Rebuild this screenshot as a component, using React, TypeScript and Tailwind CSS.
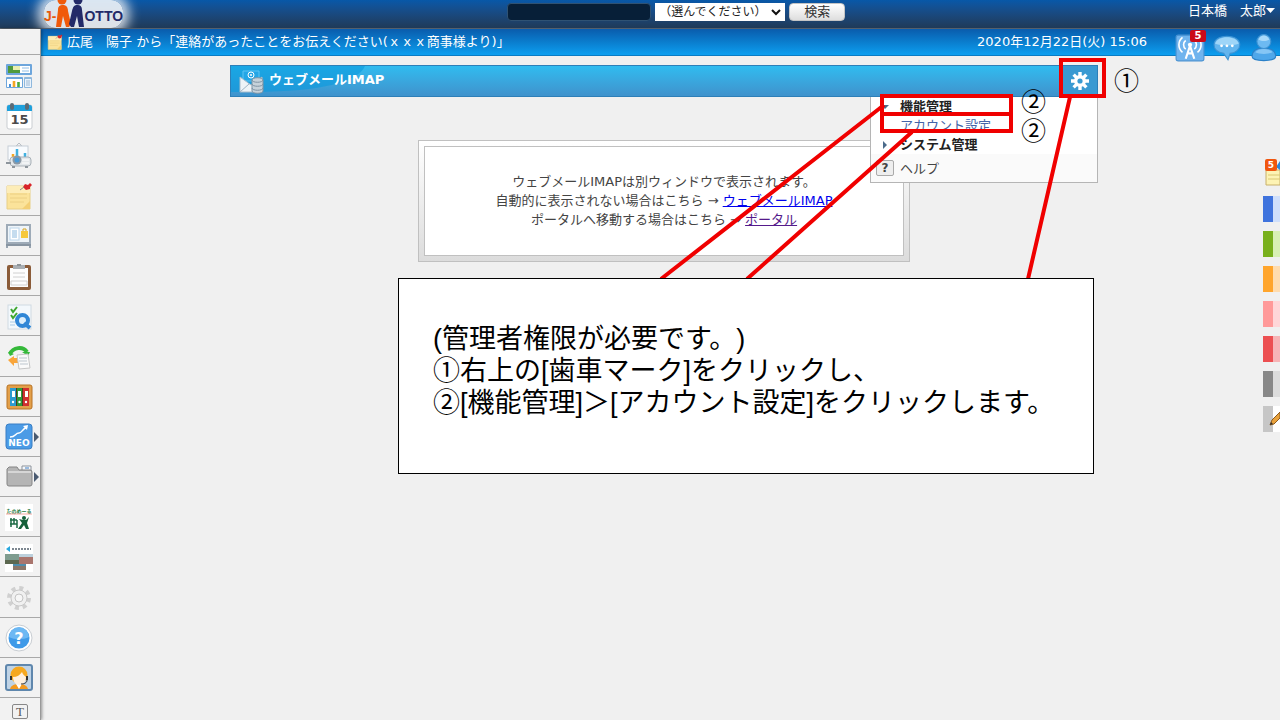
import React from "react";

const Svg = ({ children, className = "size-7" }: { children: React.ReactNode; className?: string }) => (
  <svg viewBox="0 0 28 28" fill="none" aria-hidden="true" className={className}>
    {children}
  </svg>
);

const PortalIcon = () => (
  <Svg>
    <rect x="1" y="2" width="26" height="11" rx="1" fill="#6ea6dc" />
    <rect x="3" y="4" width="22" height="7" fill="#fff" />
    <rect x="3" y="4" width="12" height="7" fill="#4f9a3c" />
    <path d="M8 4h7v4H8z" fill="#e9efb0" />
    <path d="M17 6h7M17 9h7" stroke="#8fbde6" strokeWidth="1" />
    <rect x="1" y="15" width="17" height="11" rx="1" fill="#6ea6dc" />
    <rect x="2" y="17" width="15" height="8" fill="#fff" />
    <path d="M5 25v-3" stroke="#4a90d9" strokeWidth="2" />
    <path d="M9 25v-6" stroke="#f5a623" strokeWidth="2.6" />
    <path d="M13.500 25v-5" stroke="#4ca93c" strokeWidth="2.600" />
    <rect x="19" y="15" width="8" height="11" rx="1" fill="#8fb8dd" />
    <rect x="20" y="17" width="6" height="8" fill="#eaf3fc" />
    <path d="M21 19h4M21 21h4M21 23h4" stroke="#9bb8d4" />
  </Svg>
);

const CalendarIcon = () => (
  <Svg>
    <rect x="2" y="3" width="25" height="24" rx="2" fill="#fff" stroke="#c9cdd1" />
    <path d="M2 5a2 2 0 0 1 2-2h21a2 2 0 0 1 2 2v4H2z" fill="#1ea0dc" />
    <rect x="5" y="1" width="4" height="7" rx="2" fill="#5b6a75" />
    <rect x="20" y="1" width="4" height="7" rx="2" fill="#5b6a75" />
    <text x="14.500" y="22" textAnchor="middle" fontSize="13" fontWeight="700" fill="#4a4a4a">15</text>
  </Svg>
);

const ProjectorIcon = () => (
  <Svg>
    <path d="M14 1l3 3h-6z" stroke="#b9bec4" />
    <rect x="3" y="4" width="20" height="14" fill="#f8fbfe" stroke="#c6ced6" />
    <path d="M8 16v-4" stroke="#f5a623" strokeWidth="2.500" />
    <path d="M12 14V7M20 15v-4" stroke="#3fb0e0" strokeWidth="2.500" />
    <rect x="5" y="15" width="21" height="9" rx="3" fill="#e3e7ea" stroke="#a9b1b8" />
    <path d="M17 18h7M17 21h7" stroke="#fff" />
    <circle cx="12" cy="18" r="4.500" fill="#8a98a5" />
    <circle cx="12" cy="18" r="2.500" fill="#4a9bd8" />
    <path d="M1 21h5M7 25h3M20 25h3" stroke="#8d959c" strokeWidth="2" />
  </Svg>
);

const StickyIcon = ({ className }: { className?: string }) => (
  <Svg className={className}>
    <path d="M2 4h23v23H2z" fill="#fbe39a" stroke="#e8cf86" />
    <path d="M2 4h23v7H2z" fill="#fdedb8" />
    <path d="M5 12h17M5 16h17M5 20h14" stroke="#ecd084" />
    <path d="M25 19v8h-8z" fill="#f3cf74" />
    <path d="M18 5l2-3 3 1 2-2 2 2-2 2v2l-4 1z" fill="#d8232a" />
    <path d="M15 8l4-3" stroke="#888" />
  </Svg>
);

const BoardIcon = () => (
  <Svg>
    <path d="M2 3v23M25 3v23" stroke="#98a4b0" strokeWidth="2" />
    <rect x="2" y="3" width="23" height="18" fill="#eef4f9" stroke="#9eabb8" strokeWidth="2" />
    <rect x="5" y="6" width="9" height="12" fill="#fff" stroke="#bcd6ec" />
    <path d="M7 9h5M7 11h5M7 13h5M7 15h5" stroke="#8bb9de" />
    <rect x="16" y="9" width="7" height="7" fill="#f6c83c" />
    <path d="M18 9V7h3v2" stroke="#d9a520" />
    <path d="M1 23h25" stroke="#8895a2" strokeWidth="2" />
  </Svg>
);

const ClipboardIcon = () => (
  <Svg>
    <rect x="2" y="2" width="24" height="25" rx="2" fill="#8b5c39" />
    <rect x="5" y="5" width="18" height="19" fill="#fdfdfd" />
    <path d="M8 2h12v4H8z" fill="#a9afb4" />
    <path d="M12 1h4v2h-4z" fill="#8d9499" />
    <path d="M8 10h12M8 14h12M6 18h16v4H6z" stroke="#d0d0d0" />
  </Svg>
);

const QuestionnaireIcon = () => (
  <Svg>
    <rect x="3" y="2" width="23" height="24" fill="#f3f8fc" stroke="#d0dae2" />
    <path d="M6 6l2 3 4-5M6 12l2 3 4-5" stroke="#3ea72f" strokeWidth="2" />
    <path d="M5 19h5M5 22h5" stroke="#a8cbe6" />
    <circle cx="17.500" cy="17.500" r="5.500" stroke="#2f86d6" strokeWidth="4" fill="#dceefb" />
    <path d="M19 20l6 5" stroke="#2f86d6" strokeWidth="4" />
  </Svg>
);

const WorkflowIcon = () => (
  <Svg>
    <path d="M5 11C8 4 18 3 22 9" stroke="#35b93a" strokeWidth="4" />
    <path d="M17 9h8l-2 4z" fill="#35b93a" />
    <path d="M3 9l2 4 4-2z" fill="#35b93a" />
    <path d="M3 17l6-4v2h5v5H9v3z" fill="#f9a53a" />
    <path d="M12 12l11-1 2 14-11 1z" fill="#fafafa" stroke="#c6c6c6" />
    <path d="M14 15h8M14 18h8M15 21h8" stroke="#bdc6ce" />
  </Svg>
);

const CabinetIcon = () => (
  <Svg>
    <rect x="2" y="2" width="25" height="24" rx="2" fill="#e3a04a" stroke="#b87324" />
    <rect x="5" y="5" width="19" height="18" fill="#4f3a22" />
    <rect x="5" y="5" width="6" height="18" fill="#2c9bd0" />
    <rect x="12" y="5" width="5" height="18" fill="#2f9a3a" />
    <rect x="18" y="5" width="6" height="18" fill="#d03030" />
    <path d="M7 8h3v6H7zM13 8h3v6h-3zM20 8h3v6h-3z" fill="#fff" />
    <circle cx="8" cy="19" r="1.200" fill="#fff" />
    <circle cx="14.500" cy="19" r="1.200" fill="#fff" />
    <circle cx="21" cy="19" r="1.200" fill="#fff" />
  </Svg>
);

const NeoIcon = () => (
  <Svg>
    <rect x="1" y="1" width="26" height="25" rx="3" fill="#4b9be6" stroke="#3a7fc4" />
    <path d="M5 14c6 0 5-4 9-4 3 0 3-4 8-6" stroke="#fff" strokeWidth="1.500" />
    <path d="M18 3l5-1-1 5z" fill="#fff" />
    <text x="14" y="23" textAnchor="middle" fontSize="9" fontWeight="700" fill="#fff">NEO</text>
  </Svg>
);

const FolderIcon = () => (
  <Svg>
    <path d="M17 3h9v8h-9z" fill="#f6f8fb" stroke="#8c939b" />
    <path d="M20 5h4" stroke="#3f7fc4" />
    <path d="M2 6l2-2h8l2 3h11a2 2 0 0 1 2 2v12a2 2 0 0 1-2 2H4a2 2 0 0 1-2-2z" fill="#b5b5b5" stroke="#858585" />
    <path d="M3 9h23" stroke="#d6d6d6" strokeWidth="2" />
  </Svg>
);

const TanomailIcon = () => (
  <Svg>
    <rect width="28" height="27" fill="#fff" />
    <text x="14" y="9" textAnchor="middle" fontSize="5" fontWeight="700" fill="#1d7a3e">たのめーる</text>
    <path d="M1 10h26" stroke="#f4a8a0" />
    <path d="M5 16h7M6 14v9M9 14v6M5 20h7v4M12 16v8" stroke="#1d6b45" strokeWidth="1.500" />
    <circle cx="19" cy="14" r="2" fill="#15603a" />
    <path d="M14 15l4 1h3l3-3-2 6 2 6h-3l-2-4-3 4h-3l4-6z" fill="#15603a" />
  </Svg>
);

const TravelIcon = () => (
  <Svg>
    <rect width="28" height="28" fill="#fff" />
    <path d="M1 5l4-3v6z" fill="#29a8df" />
    <path d="M7 5h19" stroke="#7d8790" strokeWidth="2" strokeDasharray="2 1" />
    <rect y="10" width="14" height="10" fill="#7f9c8f" />
    <rect x="14" y="10" width="14" height="10" fill="#a9756d" />
    <path d="M0 16h14v4H0z" fill="#5c6850" />
    <path d="M14 10h14v3H14z" fill="#bcd0dc" />
    <rect x="8" y="20" width="13" height="6" fill="#8b776a" />
    <path d="M8 20h13v2H8z" fill="#4f8dad" />
  </Svg>
);

const SettingsIcon = () => (
  <Svg>
    <circle cx="14" cy="14" r="10" stroke="#d0d0d0" strokeWidth="4" strokeDasharray="4 3.850" />
    <circle cx="14" cy="14" r="8" fill="#f0f0f0" stroke="#c8c8c8" />
    <circle cx="14" cy="14" r="4" fill="#f6f6f6" stroke="#c4c4c4" />
  </Svg>
);

const HelpIcon = () => (
  <Svg>
    <circle cx="14" cy="14" r="13" fill="#fff" stroke="#c8cdd2" />
    <circle cx="14" cy="14" r="10.500" fill="#3f9ae8" />
    <path d="M4 13a10 10 0 0 1 20 0c-6 3-14 3-20 0z" fill="#6db8f3" />
    <text x="14" y="20" textAnchor="middle" fontSize="16" fontWeight="700" fill="#fff">?</text>
  </Svg>
);

const SupportIcon = () => (
  <Svg>
    <rect x="1" y="1" width="26" height="25" rx="2" fill="#bfd3e6" stroke="#5f87ad" strokeWidth="2" />
    <path d="M5 25c1-4 5-5 9-5s8 1 9 5z" fill="#f49a20" />
    <path d="M11 20l3 5 3-5z" fill="#fff" />
    <circle cx="14" cy="11" r="8.500" fill="#f6a81f" />
    <path d="M8 13c4 0 7-2 9-5 1 3 3 4 4 5 0 5-3 8-6.500 8S8 18 8 13z" fill="#fff0df" />
    <path d="M6 12v4M22 12v4" stroke="#333" strokeWidth="2" />
    <path d="M22 16c0 3-3 4-6 4" stroke="#333" />
  </Svg>
);

const navItems = [
  { label: "ポータル", icon: <PortalIcon /> },
  { label: "スケジュール", icon: <CalendarIcon /> },
  { label: "設備予約", icon: <ProjectorIcon /> },
  { label: "伝言・所在", icon: <StickyIcon /> },
  { label: "掲示板", icon: <BoardIcon /> },
  { label: "回覧板", icon: <ClipboardIcon /> },
  { label: "アンケート", icon: <QuestionnaireIcon /> },
  { label: "ワークフロー", icon: <WorkflowIcon /> },
  { label: "文書管理", icon: <CabinetIcon /> },
  { label: "NEO", icon: <NeoIcon />, hasMenu: true },
  { label: "フォルダ", icon: <FolderIcon />, hasMenu: true },
  { label: "たのめーる", icon: <TanomailIcon /> },
  { label: "出張手配", icon: <TravelIcon /> },
  { label: "設定", icon: <SettingsIcon /> },
  { label: "ヘルプ", icon: <HelpIcon /> },
  { label: "サポート", icon: <SupportIcon /> },
];

const tabs = [
  { label: "青", className: "border-[#3f73dd] bg-[#cfdffb]" },
  { label: "緑", className: "border-[#78b01c] bg-[#d8f0b4]" },
  { label: "橙", className: "border-[#ffa52c] bg-[#ffdcae]" },
  { label: "桃", className: "border-[#ff9999] bg-[#ffd6d8]" },
  { label: "赤", className: "border-[#ec4f51] bg-[#f7b4b6]" },
  { label: "灰", className: "border-[#888888] bg-[#dcdcdc]" },
];

const Logo = () => (
  <a
    href="#"
    aria-label="J-MOTTO"
    className="ml-11 flex h-7 items-center justify-self-start rounded-xl bg-white/85 font-['Liberation_Sans',sans-serif] text-[14px] leading-7 font-bold shadow-[0_0_12px_6px_#ffffffcc]"
  >
    <span className="pt-1 text-[#e8590c]">J-</span>
    <svg viewBox="0 0 28 28" fill="none" aria-hidden="true" className="size-7">
      <circle cx="6" cy="0" r="4.500" fill="#f05a0a" />
      <circle cx="22" cy="0" r="4.500" fill="#232a68" />
      <path d="M0 27l2-17c0-4 2-5 5-5s5 2 5 6l3 13-2 3h-3L7 16 5 27z" fill="#f05a0a" />
      <path d="M28 27l-2-17c0-4-2-5-5-5s-4 2-5 6l-3 13 2 3h3l3-11 2 11z" fill="#232a68" />
    </svg>
    <span className="pt-1 text-[#232a68]">OTTO</span>
  </a>
);

const Header = () => (
  <header className="grid h-[29px] grid-cols-[7fr_auto_6fr] items-start overflow-hidden border-b border-[#55606c] bg-linear-to-b from-[#0758a8] to-[#1f3a58]">
    <Logo />
    <form className="flex gap-1 pt-[3px]" onSubmit={(e) => e.preventDefault()}>
      <input
        type="text"
        aria-label="検索キーワード"
        className="h-[18px] w-36 rounded-sm border border-[#2f5273] bg-[#071f38] px-1 text-white"
      />
      <span className="relative">
        <select aria-label="検索対象" className="block h-[18px] w-[130px] appearance-none bg-white pl-1 text-[12px] leading-[18px] text-[#222]">
          <option>（選んでください）</option>
        </select>
        <svg viewBox="0 0 10 8" fill="none" aria-hidden="true" className="pointer-events-none absolute top-[5px] right-1 h-2 w-2.5">
          <path d="M1 2l4 4 4-4" stroke="#111" strokeWidth="2" />
        </svg>
      </span>
      <button type="submit" className="h-[18px] w-14 rounded-sm border border-[#c4c4c4] bg-linear-to-b from-white to-[#dedede] leading-4 text-[#333]">
        検索
      </button>
    </form>
    <button type="button" className="flex items-center justify-self-end pt-0.5 pr-1 leading-[18px] text-white">
      日本橋　太郎
      <svg viewBox="0 0 10 6" aria-hidden="true" className="h-1.5 w-2.5">
        <path d="M0 0h9L4.500 5z" fill="#fff" />
      </svg>
    </button>
  </header>
);

const Sidebar = () => (
  <nav aria-label="メインメニュー" className="z-10 flex w-[41px] shrink-0 flex-col border-r border-[#999] bg-[#f2f2f2] shadow-[1px_0_3px_#00000066]">
    <div className="h-[26px] border-b border-[#a9a9a9]" />
    {navItems.map((item) => (
      <button
        key={item.label}
        type="button"
        aria-label={item.label}
        className="flex flex-1 basis-10 items-center border-b border-[#a9a9a9] pt-0.5 pl-[5px]"
      >
        {item.icon}
        {item.hasMenu && (
          <svg viewBox="0 0 5 10" aria-hidden="true" className="ml-px h-2.5 w-[5px]">
            <path d="M0 0l5 5-5 5z" fill="#4a5a70" />
          </svg>
        )}
      </button>
    ))}
    <button type="button" aria-label="テキスト表示" className="flex h-[22px] items-center justify-center pt-1">
      <span className="h-[15px] w-4 rounded-xs border border-[#888] font-['Liberation_Serif',serif] text-[13px] leading-[13px] text-[#555]">T</span>
    </button>
  </nav>
);

const NoticeBar = () => (
  <div className="flex h-[27px] items-center border-b border-[#0a7cc4] bg-linear-to-b from-[#0a5cac] to-[#0d9ff0] pl-1.5 text-white">
    <StickyIcon className="size-4" />
    <span className="ml-1">広尾　陽子 から「連絡があったことをお伝えください(ｘｘｘ商事様より)」</span>
    <span className="mr-7 ml-auto">2020年12月22日(火) 15:06</span>
    <div className="flex gap-2 self-start pt-1">
      <button type="button" aria-label="通知 5件" className="relative">
        <Svg className="size-[30px]">
          <rect x="1" y="2" width="26" height="24" rx="2" fill="#70b4ee" stroke="#4a92d2" />
          <circle cx="14" cy="11" r="2" fill="#fff" />
          <path d="M14 12l-4 12M14 12l4 12M11 19h6" stroke="#fff" strokeWidth="2" />
          <path d="M10 15a5 5 0 0 1 0-8M18 15a5 5 0 0 0 0-8M7 18a9 9 0 0 1 0-14M21 18a9 9 0 0 0 0-14" stroke="#fff" strokeWidth="1.500" />
        </Svg>
        <span className="absolute -top-[3px] -right-px h-3 w-4 rounded-xs bg-[#cb0a18] text-center text-[10px] leading-3 font-bold">5</span>
      </button>
      <button type="button" aria-label="チャット">
        <Svg className="size-[30px]">
          <path d="M13 3c8 0 12 4 12 8s-4 8-9 8l-2 6-4-6c-6-1-9-4-9-8s4-8 12-8z" fill="#63b5ee" stroke="#3f93d3" />
          <path d="M2 10c2-8 20-8 22 0-6 2-16 2-22 0z" fill="#9ed5f8" />
          <circle cx="8" cy="12" r="1.300" fill="#fff" />
          <circle cx="13" cy="12" r="1.300" fill="#fff" />
          <circle cx="18" cy="12" r="1.300" fill="#fff" />
        </Svg>
      </button>
      <button type="button" aria-label="プロフィール" className="-mr-px">
        <Svg className="size-[30px]">
          <path d="M1 22c0-5 4-8 11-8s11 3 11 8c0 5-22 5-22 0z" fill="#4fa7ea" stroke="#2a80c8" />
          <path d="M4 18c3-4 13-4 16 0-4 2-12 2-16 0z" fill="#86c6f5" />
          <circle cx="12" cy="8" r="6.500" fill="#6dbaf2" stroke="#3f93d3" />
          <path d="M7 6c2-5 8-5 10 0-3 2-7 2-10 0z" fill="#a8d9fa" />
        </Svg>
      </button>
    </div>
  </div>
);

const GearMenu = () => (
  <div className="absolute top-8 right-0 z-10 w-[228px] border border-t-0 border-[#b5b5b5] bg-white text-[13px] leading-[19px]">
    <button type="button" className="flex h-[19px] w-full items-center pl-2.5 font-bold text-[#222]">
      <svg viewBox="0 0 8 8" aria-hidden="true" className="mr-[11px] size-2">
        <path d="M0 2h8L4 6z" fill="#4a6a8a" />
      </svg>
      機能管理
    </button>
    <a href="#" className="block h-[19px] pl-[29px] text-[#4464a8]">アカウント設定</a>
    <button type="button" className="flex h-[19px] w-full items-center pl-2.5 font-bold text-[#222]">
      <svg viewBox="0 0 8 8" aria-hidden="true" className="mr-[11px] size-2">
        <path d="M2 0l4 4-4 4z" fill="#4a6a8a" />
      </svg>
      システム管理
    </button>
    <a href="#" className="flex h-7 items-center gap-1.5 bg-[#fafafa] pl-[5px] text-[#444]">
      <span className="flex h-4 w-[18px] items-center justify-center rounded-xs border border-[#aaa] bg-[#eee] text-[12px] font-bold">?</span>
      ヘルプ
    </a>
  </div>
);

const TitleBar = () => (
  <div className="relative flex h-8 items-center overflow-hidden border border-[#2d7fb8] bg-linear-to-b from-[#2fbcf0] to-[#3f92cc] pl-2">
    <svg viewBox="0 0 134 30" aria-hidden="true" className="absolute top-0 left-0 h-[30px] w-[134px]">
      <path d="M0 0h134c-8 18-50 27-134 26z" fill="#0a9add" fillOpacity="0.6" />
    </svg>
    <svg viewBox="0 0 26 26" fill="none" aria-hidden="true" className="relative mr-1 size-[26px]">
      <path d="M4 3h16v10H4z" fill="#24a6e6" stroke="#5cc4f3" />
      <circle cx="12" cy="7" r="3" stroke="#fff" />
      <circle cx="12" cy="7" r="1" fill="#fff" />
      <path d="M1 9l11 8 11-8v15H1z" fill="#eef3f7" stroke="#a8bccb" />
      <path d="M1 24l9-8M22 24l-9-8" stroke="#9fb4c4" />
      <path d="M13 12c0-3 11-3 11 0v11c0 3-11 3-11 0z" fill="#c7d2da" stroke="#7e93a3" />
      <path d="M13 12c0 3 11 3 11 0M13 16c0 3 11 3 11 0M13 20c0 3 11 3 11 0" stroke="#7e93a3" />
    </svg>
    <h1 className="relative self-start pt-1 leading-5 font-bold text-white">ウェブメールIMAP</h1>
    <button type="button" aria-label="設定" className="ml-auto flex h-full w-9 items-center justify-center border-l border-[#2d7fb8] bg-[#3a9ad2]">
      <svg viewBox="0 0 20 20" fill="none" aria-hidden="true" className="size-5">
        <path
          d="M10 1v18M1 10h18M3.600 3.600l12.800 12.800M16.400 3.600L3.600 16.400"
          stroke="#fff"
          strokeWidth="3.400"
        />
        <circle cx="10" cy="10" r="6" fill="#fff" />
        <circle cx="10" cy="10" r="2.600" fill="#3a9ad2" />
      </svg>
    </button>
  </div>
);

// Red frames and leader lines of the guide, drawn over the title bar and its menu
const GuideMarks = () => (
  <div className="pointer-events-none absolute inset-0 z-20 font-['Liberation_Sans','Noto_Sans_CJK_JP',sans-serif] text-[25px] leading-7 text-black">
    <svg viewBox="0 0 880 214" fill="none" aria-hidden="true" className="absolute top-0 left-0 h-[214px] w-[880px] overflow-visible">
      <g stroke="#f00000" strokeWidth="4">
        <rect x="831" y="-5" width="43" height="36" />
        <rect x="652" y="31" width="129" height="18" />
        <rect x="652" y="49" width="129" height="17" />
        <path d="M654 40L431 214M682 67L517 214M840 32L798 214" />
      </g>
    </svg>
    <span className="absolute top-0.5 -right-[41px]">①</span>
    <span className="absolute top-[23px] right-[52px]">②</span>
    <span className="absolute top-[52px] right-[52px]">②</span>
  </div>
);

export default function App() {
  return (
    <div className="flex min-h-screen flex-col overflow-hidden bg-[#f0f0f0] font-['DejaVu_Sans','Noto_Sans_CJK_JP',sans-serif] text-[13px] text-[#444]">
      <Header />
      <div className="flex flex-1">
        <Sidebar />
        <div className="min-w-0 flex-1">
          <NoticeBar />
          <div className="flex pl-6">
            <main className="flex-1 pt-[9px]">
              <div className="relative mx-auto w-full max-w-[868px]">
                <TitleBar />
                <GearMenu />
                <GuideMarks />
                <section className="mx-auto mt-[43px] max-w-[492px] border border-[#c0c0c0] bg-linear-to-b from-white to-[#dcdcdc] p-[5px]">
                  <div className="border border-[#c0c0c0] bg-white pt-[25px] pb-[26px] text-center leading-[19px]">
                    <p>ウェブメールIMAPは別ウィンドウで表示されます。</p>
                    <p>
                      自動的に表示されない場合はこちら → <a href="#" className="text-[#0000ee] underline">ウェブメールIMAP</a>
                    </p>
                    <p>
                      ポータルへ移動する場合はこちら → <a href="#" className="text-[#551a8b] underline">ポータル</a>
                    </p>
                  </div>
                </section>
                <section className="relative z-30 mt-4 mr-1 ml-[168px] border border-black bg-white pt-11 pb-[54px] pl-[34px] font-['Liberation_Sans','Noto_Sans_CJK_JP',sans-serif] text-[27px] leading-8 text-black [text-spacing-trim:space-all]">
                  <p>(管理者権限が必要です。)</p>
                  <p>①右上の[歯車マーク]をクリックし、</p>
                  <p>②[機能管理]＞[アカウント設定]をクリックします。</p>
                </section>
              </div>
            </main>
            <aside aria-label="付箋" className="mt-[103px] flex w-[17px] shrink-0 flex-col gap-[9px] overflow-hidden">
              <button type="button" aria-label="付箋 5件" className="relative h-7">
                <svg viewBox="0 0 17 28" fill="none" aria-hidden="true" className="h-7 w-[17px]">
                  <path d="M3 11h14v15H3z" fill="#fdf3b4" stroke="#c8b06a" />
                  <path d="M5 16h12M5 20h12" stroke="#dac873" />
                  <path d="M13 8l4-6v9z" fill="#2f86d6" />
                </svg>
                <span className="absolute top-0 left-0.5 size-3 rounded-xs bg-[#f0560f] text-center text-[9px] leading-3 font-bold text-white">5</span>
              </button>
              {tabs.map((tab) => (
                <button key={tab.label} type="button" aria-label={tab.label} className={`h-[26px] border-l-10 ${tab.className}`} />
              ))}
              <button type="button" aria-label="編集" className="h-[26px] border-l-10 border-[#c6c6c6] bg-white">
                <svg viewBox="0 0 17 26" fill="none" aria-hidden="true" className="-ml-2.5 h-[26px] w-[17px]">
                  <path d="M7 19l2-5 8-8v6l-6 6z" fill="#e9a23c" stroke="#8d5a1c" />
                  <path d="M7 19l1-3 2 2z" fill="#333" />
                </svg>
              </button>
            </aside>
          </div>
        </div>
      </div>
    </div>
  );
}
